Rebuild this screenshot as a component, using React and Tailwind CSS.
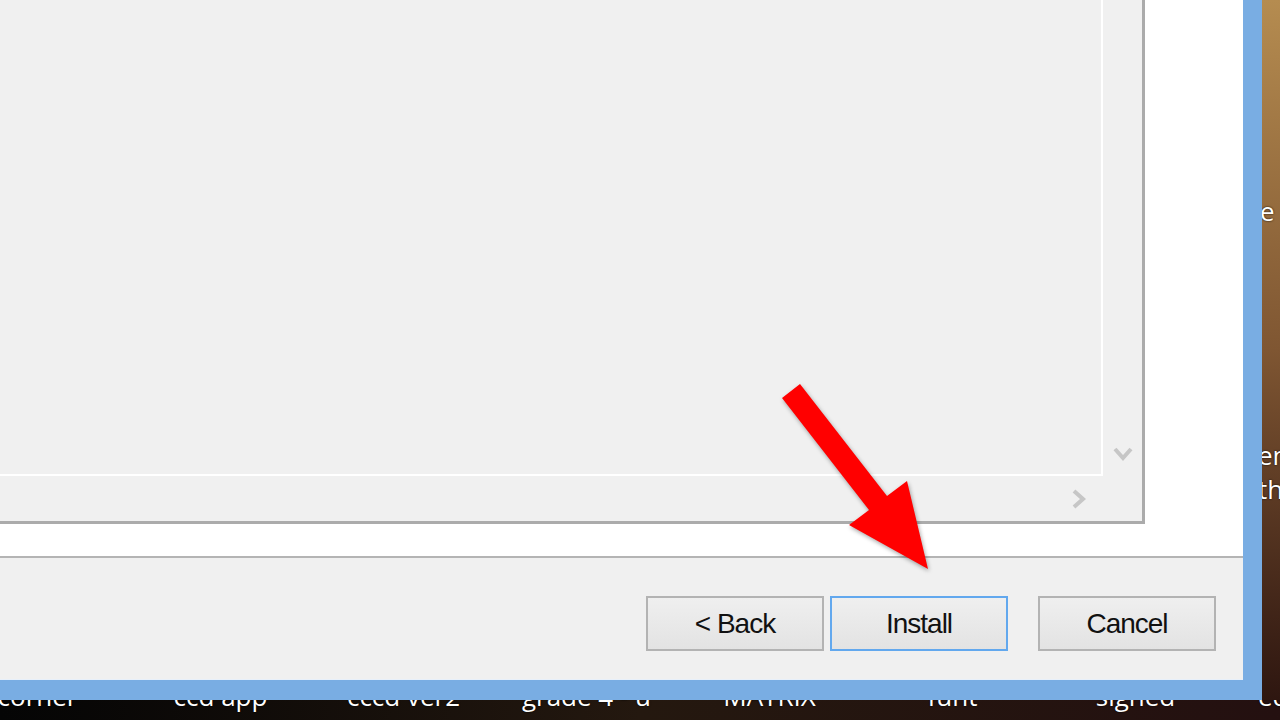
import React from "react";

const uiFont = { fontFamily: '"Liberation Sans", Arial, sans-serif' };
const deskFont = { fontFamily: '"Open Sans", "Noto Sans", sans-serif' };

const DownChevron = () => (
  <svg width="20" height="16" viewBox="0 0 20 16">
    <polyline points="2,3 10,12 18,3" fill="none" stroke="#c6c6c6" strokeWidth="4" />
  </svg>
);

const RightChevron = () => (
  <svg width="16" height="20" viewBox="0 0 16 20">
    <polyline points="3,2 12,10 3,18" fill="none" stroke="#c6c6c6" strokeWidth="4" />
  </svg>
);

const DialogButton = ({ label, focused }) => (
  <button
    className={
      "h-[55px] w-[178px] border-2 bg-gradient-to-b from-[#efefef] to-[#e3e3e3] text-[28px] tracking-[-1px] text-[#111] " +
      (focused ? "border-[#62a8ee]" : "border-[#b3b3b3]")
    }
    style={uiFont}
  >
    {label}
  </button>
);

const desktopLabels = ["corner", "ccd app", "cccd ver2", "grade 4 - u", "MATRIX", "funt", "signed", "edu notes"];

export default function App() {
  return (
    <div className="relative w-[1280px] h-[720px] overflow-hidden bg-black">
      <div className="flex h-[700px]">
        {/* installer dialog */}
        <div className="w-[1262px] h-[700px] flex flex-col border-r-[19px] border-b-[20px] border-[#79ade3]">
          <div className="h-[556px] bg-white">
            <div className="w-[1145px] h-[524px] bg-[#f0f0f0] border-r-[3px] border-b-[3px] border-[#ababab] flex flex-col">
              <div className="flex h-[476px]">
                <div className="w-[1103px] border-r-2 border-b-2 border-white" />
                <div className="flex-1 flex items-end justify-center pb-[14px]">
                  <DownChevron />
                </div>
              </div>
              <div className="flex-1 flex">
                <div className="w-[1103px] flex items-center justify-end pr-[16px]">
                  <RightChevron />
                </div>
              </div>
            </div>
          </div>
          <div className="h-[2px] bg-[#b4b4b4]" />
          <div className="flex-1 bg-[#f0f0f0] flex justify-end items-start pt-[38px] pr-[27px] border-b border-[#e8f0fa]">
            <div className="flex gap-[6px]">
              <DialogButton label="< Back" />
              <DialogButton label="Install" focused />
            </div>
            <div className="ml-[30px]">
              <DialogButton label="Cancel" />
            </div>
          </div>
        </div>

        {/* desktop visible on the right */}
        <div
          className="flex-1 flex flex-col overflow-hidden bg-gradient-to-b from-[#b58c50] via-[#7f5632] to-[#2e1610] text-white text-[26px] leading-[26px]"
          style={deskFont}
        >
          <div className="mt-[198px] -ml-[2px] whitespace-nowrap [text-shadow:0_0_2px_#000]">e</div>
          <div className="mt-[218px] -ml-[4px] whitespace-nowrap [text-shadow:0_0_2px_#000]">en</div>
          <div className="mt-[8px] -ml-[4px] whitespace-nowrap [text-shadow:0_0_2px_#000]">th</div>
        </div>
      </div>

      {/* desktop icon labels below the dialog */}
      <div
        className="h-[20px] overflow-hidden bg-gradient-to-r from-[#050505] via-[#24180f] to-[#241010]"
        style={deskFont}
      >
        <div className="flex -ml-[54px] -mt-[17px]">
          {desktopLabels.map((label) => (
            <div
              key={label}
              className="w-[183px] shrink-0 text-center text-white text-[26px] leading-[26px] whitespace-nowrap [text-shadow:0_0_2px_#000]"
            >
              {label}
            </div>
          ))}
        </div>
      </div>

      {/* red arrow annotation */}
      <svg
        className="absolute left-0 top-0 pointer-events-none"
        width="1280"
        height="720"
        viewBox="0 0 1280 720"
        style={{ filter: "drop-shadow(1px 2px 2px rgba(0,0,0,0.35))" }}
      >
        <polygon
          points="782,398 800,384 887,496 907,481 928,569 849,525 869,510"
          fill="#ff0000"
        />
      </svg>
    </div>
  );
}
